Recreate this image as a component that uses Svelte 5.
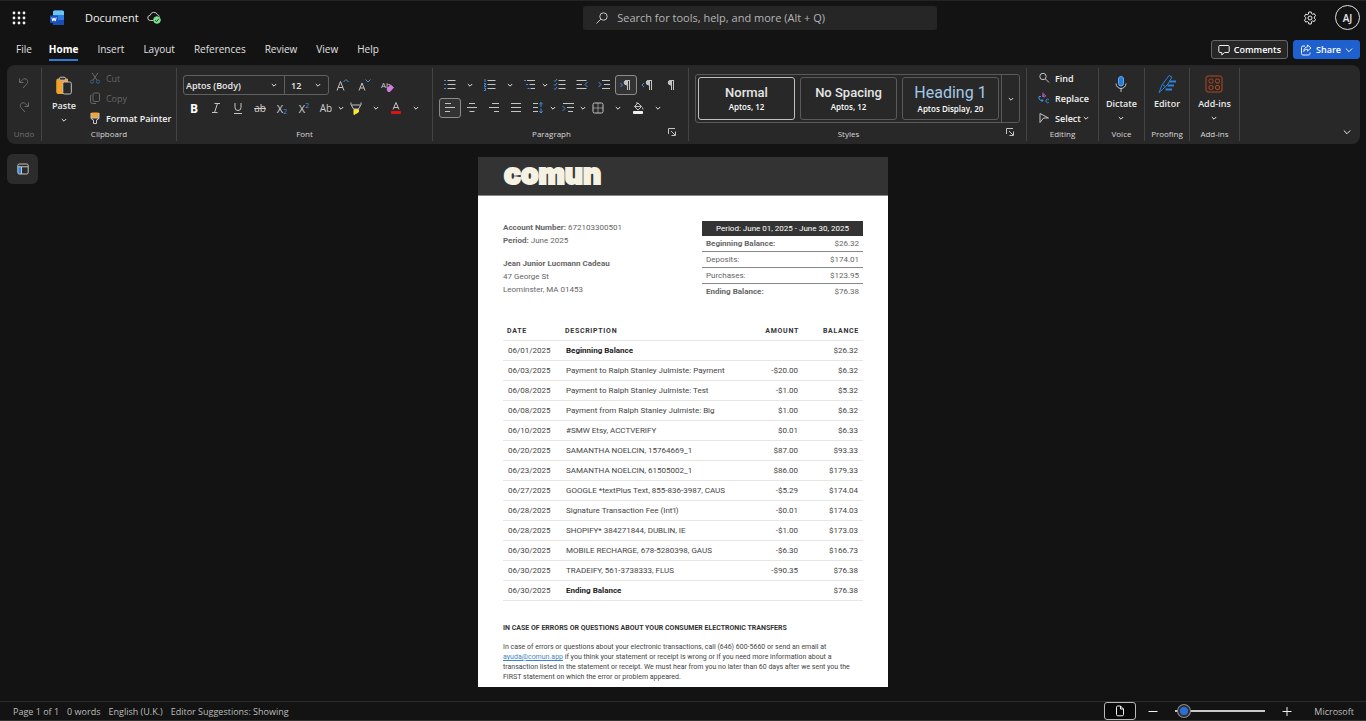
<script>
  let fontFamily = $state('Aptos (Body)');
  let fontSize = $state('12');
  let zoom = $state(3);
  let query = $state('');

  const tabs = ['File', 'Home', 'Insert', 'Layout', 'References', 'Review', 'View', 'Help'];

  const styles = [
    { name: 'Normal', font: 'Aptos, 12', selected: true },
    { name: 'No Spacing', font: 'Aptos, 12' },
    { name: 'Heading 1', font: 'Aptos Display, 20', heading: true }
  ];

  const summary = [
    { label: 'Beginning Balance:', value: '$26.32', strong: true },
    { label: 'Deposits:', value: '$174.01' },
    { label: 'Purchases:', value: '$123.95' },
    { label: 'Ending Balance:', value: '$76.38', strong: true }
  ];

  const rows = [
    ['06/01/2025', 'Beginning Balance', '', '$26.32'],
    ['06/03/2025', 'Payment to Ralph Stanley Julmiste: Payment', '-$20.00', '$6.32'],
    ['06/08/2025', 'Payment to Ralph Stanley Julmiste: Test', '-$1.00', '$5.32'],
    ['06/08/2025', 'Payment from Ralph Stanley Julmiste: Big', '$1.00', '$6.32'],
    ['06/10/2025', '#SMW Etsy, ACCTVERIFY', '$0.01', '$6.33'],
    ['06/20/2025', 'SAMANTHA NOELCIN, 15764669_1', '$87.00', '$93.33'],
    ['06/23/2025', 'SAMANTHA NOELCIN, 61505002_1', '$86.00', '$179.33'],
    ['06/27/2025', 'GOOGLE *textPlus Text, 855-836-3987, CAUS', '-$5.29', '$174.04'],
    ['06/28/2025', "Signature Transaction Fee (Int'l)", '-$0.01', '$174.03'],
    ['06/28/2025', 'SHOPIFY* 384271844, DUBLIN, IE', '-$1.00', '$173.03'],
    ['06/30/2025', 'MOBILE RECHARGE, 678-5280398, GAUS', '-$6.30', '$166.73'],
    ['06/30/2025', 'TRADEIFY, 561-3738333, FLUS', '-$90.35', '$76.38'],
    ['06/30/2025', 'Ending Balance', '', '$76.38']
  ];
</script>

{#snippet chevron()}
  <svg class="chev" viewBox="0 0 8 8" width="8" height="8"><path d="M1.8 3l2.2 2.2L6.2 3" /></svg>
{/snippet}

{#snippet more(label, wide)}
  <button class="drop" class:wide aria-label={label}>{@render chevron()}</button>
{/snippet}

{#snippet launcher(label)}
  <button class="launcher" aria-label={label}>
    <svg viewBox="0 0 8 8" width="8" height="8"><path d="M.5 6V.5H7M3 3l4 4M7.5 3.5v4h-4" /></svg>
  </button>
{/snippet}

{#snippet pilcrow(arrow)}
  <svg viewBox="0 0 14 14" width="14" height="14">
    {#if arrow}<path class="blue" d={arrow === 'ltr' ? 'M1.5 5l2 2-2 2' : 'M3 5L1 7l2 2'} />{/if}
    <path d="M11 2.500H7.500a2 2 0 0 0 0 4.300h1M8.500 2.500V12M10.500 2.500V12" />
    <path class="fill" d="M8.500 2.500h-1a2 2 0 0 0 0 4.300h1z" />
  </svg>
{/snippet}

<div class="app">
  <header class="topbar">
    <div class="brand">
      <button class="bare" aria-label="App launcher">
        <svg viewBox="0 0 14 14" width="14" height="14" class="dots">
          {#each [2, 7, 12] as cy}
            {#each [2, 7, 12] as cx}
              <circle {cx} {cy} r="1.4" />
            {/each}
          {/each}
        </svg>
      </button>
      <svg class="word" viewBox="0 0 14 16" width="14" height="16">
        <rect x="3" y="0.5" width="11" height="14.5" rx="1.6" fill="#2b7de0" />
        <path d="M3 2.1A1.6 1.6 0 0 1 4.6.5h7.8A1.6 1.6 0 0 1 14 2.1V5H3z" fill="#6cc6f5" />
        <path d="M3 10h11v3.4a1.6 1.6 0 0 1-1.6 1.6H4.6A1.6 1.6 0 0 1 3 13.4z" fill="#1b4fb3" />
        <rect x="0" y="5.5" width="8" height="7.5" rx="1" fill="#1a53c0" />
        <path d="M1.8 7.5l1 3.600L4 7.800l1.200 3.300 1-3.600" fill="none" stroke="#fff" />
      </svg>
      <span class="doc-name">Document</span>
      <svg viewBox="0 0 14 13" width="14" height="13">
        <path d="M6 9.500H3.500a2.600 2.600 0 0 1-.3-5.200A3.800 3.800 0 0 1 10.500 3.800 2.600 2.600 0 0 1 12.500 5.500" />
        <circle cx="10" cy="9" r="3.300" fill="#7fdc8c" style:stroke="#7fdc8c" />
        <path d="M8.200 9.200l1.300 1.300 2.400-2.600" style:stroke="#123c18" />
      </svg>
    </div>
    <label class="search">
      <svg viewBox="0 0 14 14" width="14" height="14"><circle cx="8.5" cy="5.5" r="3.7" /><path d="M5.8 8.200L1.500 12.500" /></svg>
      <input type="text" bind:value={query} aria-label="Search" placeholder="Search for tools, help, and more (Alt + Q)" />
    </label>
    <div class="account">
      <button class="bare" aria-label="Settings">
        <svg viewBox="0 0 14 14" width="14" height="14" class="bright">
          <path d="M5.800 1h2.400l.4 1.700 1 .5 1.700-.5 1.200 2-1.200 1.300v1.200l1.200 1.300-1.200 2-1.700-.5-1 .5L8.200 13H5.800l-.4-1.900-1-.5-1.700.5-1.200-2 1.200-1.300V6.600L1.500 5.200l1.200-2 1.700.5 1-.5z" />
          <circle cx="7" cy="7" r="2" />
        </svg>
      </button>
      <button class="avatar">AJ</button>
    </div>
  </header>

  <nav class="tabs">
    {#each tabs as tab}
      <button class="tab" class:active={tab === 'Home'}>{tab}</button>
    {/each}
    <div class="actions">
      <button class="comments">
        <svg viewBox="0 0 12 12" width="12" height="12" class="bright"><path d="M2 1.500h8a1.200 1.200 0 0 1 1.200 1.200v4.600A1.200 1.200 0 0 1 10 8.500H6.500L3.800 11V8.500H2A1.200 1.200 0 0 1 .8 7.300V2.700A1.200 1.200 0 0 1 2 1.500z" /></svg>
        Comments
      </button>
      <button class="share">
        <svg viewBox="0 0 12 12" width="12" height="12" class="bright"><path d="M5 2H3a1.500 1.500 0 0 0-1.500 1.500v6A1.500 1.500 0 0 0 3 11h5.500A1.500 1.500 0 0 0 10 9.500V8.500M7.500 1l3.500 3-3.500 3V5.300C5.500 5.300 4.500 6 3.800 7.500 4 4.500 5.500 3 7.500 2.800z" /></svg>
        Share
        <svg viewBox="0 0 8 8" width="8" height="8" class="bright"><path d="M.8 2.500L4 5.700l3.200-3.200" /></svg>
      </button>
    </div>
  </nav>

  <div class="ribbon">
    <section class="group undo">
      <div class="content stack">
        <button class="bare" aria-label="Undo">
          <svg viewBox="0 0 12 12" width="12" height="12" class="dim"><path d="M1.500 1.500v4h4M1.700 5.300L4.500 2.700a3 3 0 0 1 4.800.5c.8 1.300.4 2.700-.5 3.700L5 11" /></svg>
        </button>
        <button class="bare" aria-label="Redo">
          <svg viewBox="0 0 12 12" width="12" height="12" class="dim"><path d="M10.500 1.500v4h-4M10.300 5.300L7.500 2.700a3 3 0 0 0-4.800.5c-.8 1.300-.4 2.700.5 3.700L7 11" /></svg>
        </button>
      </div>
      <h2 class="muted">Undo</h2>
    </section>

    <section class="group clipboard">
      <div class="content">
        <button class="big">
          <svg viewBox="0 0 18 20" width="18" height="20">
            <path d="M3 3h9.500v3H8.500v11.500H3A1.200 1.200 0 0 1 1.800 16.300V4.200A1.200 1.200 0 0 1 3 3z" fill="#f3a02f" style:stroke="#f3a02f" />
            <rect x="4.5" y="1.2" width="6" height="3" rx="1.3" fill="#333" />
            <rect x="7.8" y="6" width="8.5" height="12" rx="1.5" fill="#282828" />
          </svg>
          <span>Paste</span>
          {@render chevron()}
        </button>
        <div class="list">
          <button class="item" disabled>
            <svg viewBox="0 0 12 12" width="12" height="12"><path class="dim" d="M3 .8l5 7.500M9 .8L4 8.300" /><g style:stroke="#345f86"><circle cx="3" cy="9.7" r="1.6" /><circle cx="9" cy="9.7" r="1.6" /></g></svg>
            Cut
          </button>
          <button class="item" disabled>
            <svg viewBox="0 0 12 12" width="12" height="12" class="dim"><rect x="4" y="1" width="6.5" height="8.5" rx="1.2" /><path d="M2.500 3a1 1 0 0 0-1 1v5.500a2 2 0 0 0 2 2H7" /></svg>
            Copy
          </button>
          <button class="item">
            <svg viewBox="0 0 12 12" width="12" height="12"><path d="M2.500 1h7v4.500h-7z" fill="#f0a336" style:stroke="#f0a336" /><path d="M2 1v5.500l2.500 1.500v3.500h3V8L10 6.500V1M2 6h8" /></svg>
            Format Painter
          </button>
        </div>
      </div>
      <h2>Clipboard</h2>
    </section>

    <section class="group font">
      <div class="content rows">
        <div class="row">
          <div class="selects">
            <label class="family">
              <select bind:value={fontFamily} aria-label="Font"><option>Aptos (Body)</option><option>Aptos Display</option></select>
              {@render chevron()}
            </label>
            <label class="size">
              <select bind:value={fontSize} aria-label="Font size"><option>11</option><option>12</option><option>14</option></select>
              {@render chevron()}
            </label>
          </div>
          <button class="tool" aria-label="Increase font size"><svg viewBox="0 0 14 14" width="14" height="14"><path d="M2 12.500l3.500-9 3.500 9M3.300 9.500h4.400" /><path class="blue" d="M8.500 4L11 1.500 13.500 4" /></svg></button>
          <button class="tool" aria-label="Decrease font size"><svg viewBox="0 0 14 14" width="14" height="14"><path d="M2 12.500l3-7.500 3 7.500M3.200 10h3.600" /><path class="blue" d="M8.500 1.500L11 4l2.500-2.500" /></svg></button>
          <button class="tool" aria-label="Clear formatting"><span class="glyph tiny">Ab</span><svg class="eraser" viewBox="0 0 8 8" width="8" height="8"><path d="M1 5l3.500-4L7.500 3.500 4 7.500H2z" fill="#d47be0" style:stroke="#d47be0" /></svg></button>
        </div>
        <div class="row">
          <button class="tool glyph bold">B</button>
          <button class="tool" aria-label="Italic"><svg viewBox="0 0 14 14" width="14" height="14"><path d="M5.500 2.500H11M3 11.500h5.500M8.500 2.500l-3 9" /></svg></button>
          <button class="tool" aria-label="Underline"><svg viewBox="0 0 14 14" width="14" height="14"><path d="M4 2v4.500a3 3 0 0 0 6 0V2M3 12.500h8" /></svg></button>
          <button class="tool glyph strike">ab</button>
          <button class="tool glyph">X<sub>2</sub></button>
          <button class="tool glyph">X<sup>2</sup></button>
          <button class="tool glyph small">Ab</button>
          {@render more('Change case')}
          <button class="tool" aria-label="Highlight"><svg viewBox="0 0 14 14" width="14" height="14"><path d="M5 8.500h4.500V11L5 13.500z" fill="#fde92b" style:stroke="#fde92b" /><path d="M2 1.500v2l2.500 4.500h5L12 3.500v-2M2.500 4h9" /></svg></button>
          {@render more('Highlight colors', true)}
          <button class="tool" aria-label="Font color"><svg viewBox="0 0 14 14" width="14" height="14"><path d="M4 8.500L7 1.500l3 7M5 6.500h4" /><path d="M2.500 10.500h9v2h-9z" fill="#dc1414" style:stroke="#dc1414" /></svg></button>
          {@render more('Font colors', true)}
        </div>
      </div>
      <h2>Font</h2>
    </section>

    <section class="group paragraph">
      <div class="content rows">
        <div class="row">
          <button class="tool" aria-label="Bullets"><svg viewBox="0 0 14 14" width="14" height="14"><path d="M4.500 2.500h8M4.500 6.500h8M4.500 10.500h8" /><path class="blue" d="M1 2.500h2M1 6.500h2M1 10.500h2" /></svg></button>
          {@render more('Bullet styles', true)}
          <button class="tool" aria-label="Numbering"><svg viewBox="0 0 14 14" width="14" height="14"><path d="M4.500 2.500h8M4.500 6.500h8M4.500 10.500h8" /><path class="blue" d="M2 1v3M1 5.500h1.500v1.500H1.500v1.500H3M1 10h1.500v2.500H1" /></svg></button>
          {@render more('Numbering styles', true)}
          <button class="tool" aria-label="Multilevel list"><svg viewBox="0 0 14 14" width="14" height="14"><path d="M4 2.500h8M6.500 6.500H12M7.500 10.500H12" /><path class="blue" d="M1 2.500h2M3 6.500h2M4.500 10.500h2" /></svg></button>
          {@render more('Multilevel styles')}
          <button class="tool" aria-label="Checklist"><svg viewBox="0 0 14 14" width="14" height="14"><path d="M5.500 2.500h7M5.500 6.500h7M5.500 10.500h7" /><path class="blue" d="M1 2.500l1 1L4 1M1 6.500l1 1L4 5M1 10.500l1 1L4 9" /></svg></button>
          <button class="tool" aria-label="Decrease indent"><svg viewBox="0 0 14 14" width="14" height="14"><path d="M1.500 2.500h10M1.500 6.500H7M1.500 10.500h10" /><path class="blue" d="M12.500 4L10 6.500 12.500 9" /></svg></button>
          <button class="tool" aria-label="Increase indent"><svg viewBox="0 0 14 14" width="14" height="14"><path d="M5 2.500h8M7 6.500h6M5 10.500h8" /><path class="blue" d="M1.500 4L4 6.500 1.500 9" /></svg></button>
          <button class="tool on" aria-label="Left-to-right">{@render pilcrow('ltr')}</button>
          <button class="tool" aria-label="Right-to-left">{@render pilcrow('rtl')}</button>
          <button class="tool" aria-label="Show marks">{@render pilcrow()}</button>
        </div>
        <div class="row">
          <button class="tool on" aria-label="Align left"><svg viewBox="0 0 14 14" width="14" height="14"><path d="M2 2.500h6M2 6.500h10M2 10.500h5" /></svg></button>
          <button class="tool" aria-label="Center"><svg viewBox="0 0 14 14" width="14" height="14"><path d="M4 2.500h6M2 6.500h10M4.500 10.500h5" /></svg></button>
          <button class="tool" aria-label="Align right"><svg viewBox="0 0 14 14" width="14" height="14"><path d="M5 2.500h7M2 6.500h10M7 10.500h5" /></svg></button>
          <button class="tool" aria-label="Justify"><svg viewBox="0 0 14 14" width="14" height="14"><path d="M2 2.500h10M2 6.500h10M2 10.500h10" /></svg></button>
          <button class="tool" aria-label="Line spacing"><svg viewBox="0 0 14 14" width="14" height="14"><path d="M2 2.500h5M2 6.500h5M2 10.500h5" /><path class="blue" d="M10 1.500V6M8.300 3.200L10 1.500l1.700 1.700M10 7.500V12M8.300 10.300L10 12l1.700-1.700" /></svg></button>
          {@render more('Line spacing options')}
          <button class="tool" aria-label="Indentation"><svg viewBox="0 0 14 14" width="14" height="14"><path d="M2 2.500h11M6 6.500h7M7 10.500h5" /><path class="blue" d="M1.500 5L4 7.500 1.500 10" /></svg></button>
          {@render more('Indentation options')}
          <button class="tool" aria-label="Borders"><svg viewBox="0 0 14 14" width="14" height="14"><rect x="2" y="2" width="10" height="10" rx="1.5" /><path d="M7 2v10M2 7h10" stroke-width=".6" /></svg></button>
          {@render more('Border styles', true)}
          <button class="tool" aria-label="Shading"><svg viewBox="0 0 14 14" width="14" height="14"><path d="M6 1v2M7 2l3.500 3.500L7 9 3.500 5.500zM3.500 5.500h7M11.500 6.500l.5 2" /><path d="M2.500 10.500h9v2h-9z" fill="#eee" style:stroke="#eee" /></svg></button>
          {@render more('Shading colors', true)}
        </div>
      </div>
      <h2>Paragraph</h2>
      {@render launcher('Paragraph settings')}
    </section>

    <section class="group styles">
      <div class="gallery">
        <div class="cards">
          {#each styles as s}
            <button class="card" class:selected={s.selected} class:heading={s.heading}>
              <span class="name">{s.name}</span>
              <span class="face">{s.font}</span>
            </button>
          {/each}
        </div>
        <button class="expand" aria-label="More styles">{@render chevron()}</button>
      </div>
      <h2>Styles</h2>
      {@render launcher('Styles pane')}
    </section>

    <section class="group editing">
      <div class="content list">
        <button class="item">
          <svg viewBox="0 0 12 12" width="12" height="12"><circle cx="5" cy="4.5" r="3.2" /><path d="M7.500 7l3.500 3.500" /></svg>
          Find
        </button>
        <button class="item">
          <svg viewBox="0 0 12 12" width="12" height="12"><path style:stroke="#b06bc4" d="M5 .5V5M5 3.800a1.200 1.200 0 1 1 2.400 0 1.200 1.200 0 0 1-2.400 0" /><path class="blue" d="M3 4.500H1v2.500l2 1.500h2M3.500 7L5 8.500 3.500 10M10.800 7.500a1.800 1.800 0 1 0 0 2.800" /></svg>
          Replace
        </button>
        <button class="item">
          <svg viewBox="0 0 12 12" width="12" height="12"><path d="M2 1.500L10.500 6H5.500L2 10.500z" /></svg>
          <span>Select</span>
          {@render chevron()}
        </button>
      </div>
      <h2>Editing</h2>
    </section>

    <section class="group voice">
      <div class="content">
        <button class="big">
          <svg viewBox="0 0 18 20" width="18" height="20"><rect x="6.5" y="2.5" width="5" height="9.5" rx="2.5" fill="#2a7bd8" style:stroke="#62a8f0" /><path d="M4 9.500a5 5 0 0 0 10 0M9 14.500V18" /></svg>
          <span>Dictate</span>
          {@render chevron()}
        </button>
      </div>
      <h2>Voice</h2>
    </section>

    <section class="group proofing">
      <div class="content">
        <button class="big">
          <svg viewBox="0 0 20 20" width="20" height="20" class="editor"><path d="M2 18.500L5 11l7-9.500 3 1.500-4 7-5.500 5.500zM6 11l3 2" /><path class="thick" d="M12.500 7.500H19M10.500 11.500H17M8.500 15.500H15" /></svg>
          <span>Editor</span>
        </button>
      </div>
      <h2>Proofing</h2>
    </section>

    <section class="group addins">
      <div class="content">
        <button class="big">
          <svg viewBox="0 0 18 20" width="18" height="20" class="rust"><rect x="1" y="2" width="16" height="16" rx="2" /><rect x="4" y="5" width="4" height="4" rx="1.5" /><rect x="10.5" y="5" width="4" height="4" rx="1.5" /><rect x="4" y="11.5" width="4" height="4" rx="1.5" /><rect x="10.5" y="11.5" width="4" height="4" rx="1.5" /></svg>
          <span>Add-ins</span>
          {@render chevron()}
        </button>
      </div>
      <h2>Add-ins</h2>
    </section>

    <button class="collapse bare" aria-label="Collapse ribbon">
      <svg viewBox="0 0 8 8" width="8" height="8" class="bright"><path d="M.8 2.500L4 5.700l3.200-3.200" /></svg>
    </button>
  </div>

  <main class="workspace">
    <button class="pane" aria-label="Navigation pane">
      <svg viewBox="0 0 12 12" width="12" height="12"><path d="M1.500 4h3v6.500h-3z" fill="#2f86e0" style:stroke="#2f86e0" /><rect x=".8" y="1" width="10.4" height="10" rx="1.5" /><path d="M1 3.800h10M4.500 3.800V11" /></svg>
    </button>

    <article class="page">
      <div class="banner">comun</div>
      <div class="body">
        <div class="intro">
          <div class="holder">
            <p><b>Account Number:</b> 672103300501<br /><b>Period:</b> June 2025</p>
            <p><b>Jean Junior Lucmann Cadeau</b><br />47 George St<br />Leominster, MA 01453</p>
          </div>
          <table class="summary">
            <thead><tr><th colspan="2">Period: June 01, 2025 - June 30, 2025</th></tr></thead>
            <tbody>
              {#each summary as line}
                <tr><td class:strong={line.strong}>{line.label}</td><td>{line.value}</td></tr>
              {/each}
            </tbody>
          </table>
        </div>

        <table class="ledger">
          <thead>
            <tr><th class="date">Date</th><th>Description</th><th class="num">Amount</th><th class="num">Balance</th></tr>
          </thead>
          <tbody>
            {#each rows as [date, description, amount, balance]}
              <tr>
                <td>{date}</td>
                <td class:strong={!amount}>{description}</td>
                <td class="num">{amount}</td>
                <td class="num">{balance}</td>
              </tr>
            {/each}
          </tbody>
        </table>

        <h3>IN CASE OF ERRORS OR QUESTIONS ABOUT YOUR CONSUMER ELECTRONIC TRANSFERS</h3>
        <p class="notice">
          In case of errors or questions about your electronic transactions, call (646) 600-5660 or send an email at
          <a href="mailto:ayuda@comun.app">ayuda@comun.app</a> if you think your statement or receipt is wrong or if you need more information about a
          transaction listed in the statement or receipt. We must hear from you no later than 60 days after we sent you the
          FIRST statement on which the error or problem appeared.
        </p>
      </div>
    </article>
  </main>

  <footer class="status">
    <span>Page 1 of 1</span>
    <span>0 words</span>
    <span>English (U.K.)</span>
    <span>Editor Suggestions: Showing</span>
    <div class="zoom">
      <button class="view" aria-label="Print layout"><svg viewBox="0 0 10 12" width="10" height="12" class="bright"><path d="M2.500 1H5.500L8.500 4v5.500a1.300 1.300 0 0 1-1.300 1.300H2.800A1.300 1.300 0 0 1 1.500 9.500V2.200A1.200 1.200 0 0 1 2.500 1zM5.500 1v3h3" /></svg></button>
      <button class="bare" aria-label="Zoom out"><svg viewBox="0 0 10 10" width="10" height="10" class="bright"><path d="M.5 5.500h9" /></svg></button>
      <input type="range" min="0" max="100" bind:value={zoom} aria-label="Zoom" />
      <button class="bare" aria-label="Zoom in"><svg viewBox="0 0 10 10" width="10" height="10" class="bright"><path d="M.5 5.500h9M5 1v9" /></svg></button>
    </div>
    <span>Microsoft</span>
  </footer>
</div>

<style>
  :global(body) {
    margin: 0;
    background: #131313;
  }

  .app {
    display: flex;
    flex-direction: column;
    min-height: 100vh;
    box-sizing: border-box;
    border-top: 1px solid #242424;
    border-bottom: 1px solid #333;
    color: #e8e8e8;
    font-family: "Open Sans", "Noto Sans", sans-serif;
    font-size: 11px;
  }

  button,
  input,
  select {
    font: inherit;
    color: inherit;
    margin: 0;
    padding: 0;
    border: none;
    background: none;
    outline: none;
  }

  button {
    display: flex;
    align-items: center;
    justify-content: center;
    white-space: nowrap;
  }

  svg {
    flex: none;
    fill: none;
    stroke: #c4c4c4;
    stroke-width: 1;
  }

  .bright { stroke: #f0f0f0; }
  .dim { stroke: #686868; }
  .blue { stroke: #3b92e8; }
  .fill { fill: #c4c4c4; }
  .chev { stroke: #e4e4e4; }
  .word { stroke: none; }
  .rust { stroke: #b5471f; }
  .editor { stroke: #2d82dc; }
  .thick { stroke-width: 2; }

  .dots {
    fill: #f0f0f0;
    stroke: none;
  }

  /* title bar */
  .topbar {
    display: grid;
    grid-template-columns: 50fr 31fr 37fr;
    align-items: center;
    height: 33px;
    padding: 0 6px 0 12px;
  }

  .brand {
    display: flex;
    align-items: center;
    gap: 8px;
  }

  .brand .word {
    margin: 0 13px 0 16px;
  }

  .doc-name {
    color: #f0f0f0;
  }

  .search {
    display: flex;
    align-items: center;
    gap: 8px;
    height: 24px;
    padding: 0 12px;
    border-radius: 3px;
    background: #262626;
  }

  .search input {
    flex: 1;
    min-width: 0;
    font-size: 11px;
  }

  .search input::placeholder {
    color: #b5b5b5;
    opacity: 1;
  }

  .account {
    display: flex;
    align-items: center;
    justify-content: flex-end;
    gap: 18px;
  }

  .avatar {
    width: 25px;
    height: 25px;
    border: 1px solid #e0e0e0;
    border-radius: 50%;
    font-size: 10px;
    font-weight: 600;
  }

  /* tabs */
  .tabs {
    display: flex;
    align-items: center;
    gap: 19px;
    height: 31px;
    padding: 0 6px 0 16px;
  }

  .tab {
    height: 23px;
    border-bottom: 2px solid transparent;
    font-size: 10px;
    color: #e0e0e0;
  }

  .tab.active {
    border-color: #2f7cd8;
    color: #fff;
    font-weight: 700;
  }

  .tab:first-child {
    margin-right: -2px;
  }

  .actions {
    display: flex;
    gap: 5px;
    margin-left: auto;
  }

  .comments,
  .share {
    gap: 4px;
    height: 19px;
    padding: 0 6px;
    border: 1px solid #666;
    border-radius: 3px;
    box-sizing: border-box;
    background: #262626;
    font-size: 9px;
    font-weight: 600;
    color: #fff;
  }

  .share {
    border-color: #1f60cf;
    background: #1f60cf;
  }

  /* ribbon */
  .ribbon {
    display: flex;
    height: 79px;
    margin: 0 6px 0 7px;
    border-radius: 8px;
    background: #282828;
    position: relative;
  }

  .group {
    display: flex;
    flex-direction: column;
    justify-content: space-between;
    box-sizing: border-box;
    margin: 3px 0;
    padding: 6px 0 1px;
    border-right: 1px solid #444;
    position: relative;
  }

  .group h2 {
    margin: 0;
    font-size: 8px;
    font-weight: 400;
    line-height: 12px;
    text-align: center;
    color: #d8d8d8;
  }

  .group h2.muted {
    color: #6e6e6e;
  }

  .paragraph h2,
  .styles h2 {
    padding-right: 18px;
  }

  .undo { width: 35px; }
  .clipboard { width: 135px; }
  .font,
  .paragraph { width: 256px; }
  .styles { width: 338px; }
  .editing { width: 72px; }
  .voice { width: 46px; }
  .proofing { width: 45px; }
  .addins { width: 50px; }

  .content {
    display: flex;
  }

  .stack {
    flex-direction: column;
    align-items: center;
    gap: 12px;
    padding-top: 3px;
  }

  .clipboard .content {
    gap: 13px;
    padding-left: 10px;
  }

  .clipboard .content,
  .editing .content {
    margin-top: -6px;
  }

  .big {
    flex-direction: column;
    font-size: 9px;
    font-weight: 600;
    line-height: 14px;
    margin: 0 auto auto;
    gap: 3px;
  }

  .clipboard .big {
    margin: 4px 0 0;
  }

  .list {
    display: flex;
    flex-direction: column;
    flex: 1;
  }

  .item {
    justify-content: flex-start;
    gap: 5px;
    height: 20px;
    font-size: 9px;
    font-weight: 600;
    color: #f4f4f4;
  }

  .item:disabled {
    font-weight: 400;
    color: #666;
  }

  .editing .list {
    padding-left: 11px;
  }

  .editing .item span {
    margin-right: -4px;
  }

  .rows {
    flex-direction: column;
    gap: 3px;
    padding: 1px 0 0 6px;
  }

  .row {
    display: flex;
    align-items: center;
    height: 20px;
  }

  .tool {
    width: 22px;
    height: 20px;
    position: relative;
    box-sizing: border-box;
  }

  .tool.on {
    border: 1px solid #8c8c8c;
    border-radius: 3px;
    background: #333;
  }

  .drop {
    width: 8px;
    height: 20px;
  }

  .drop.wide {
    width: 18px;
  }

  .glyph {
    font-size: 11px;
    color: #cfcfcf;
  }

  .glyph.bold {
    font-weight: 700;
    color: #fff;
    font-size: 12px;
  }

  .glyph.strike {
    text-decoration: line-through;
    font-size: 10px;
  }

  .glyph.small { font-size: 10px; }

  .glyph.tiny {
    font-size: 8px;
    line-height: 14px;
  }

  .eraser {
    position: absolute;
    right: 3px;
    bottom: 3px;
  }

  sub,
  sup {
    font-size: 7px;
    line-height: 7px;
    color: #3b92e8;
  }

  sub { align-self: flex-end; margin-bottom: 3px; }
  sup { align-self: flex-start; margin-top: 4px; }

  .selects {
    display: flex;
    height: 20px;
    box-sizing: border-box;
    margin-right: 2px;
    border: 1px solid #606060;
    border-radius: 3px;
  }

  .selects label {
    display: grid;
    align-items: center;
  }

  .selects select,
  .selects label > :global(svg) {
    grid-area: 1 / 1;
  }

  .selects label > :global(svg) {
    justify-self: end;
    margin-right: 6px;
    pointer-events: none;
  }

  .selects select {
    appearance: none;
    width: 100%;
    height: 18px;
    padding: 0 2px;
    font-size: 9px;
    font-weight: 600;
  }

  .family { width: 100px; }

  .size {
    width: 43px;
    border-left: 1px solid #606060;
  }

  .size select {
    padding-left: 6px;
  }

  .launcher {
    position: absolute;
    right: 12px;
    bottom: 5px;
  }

  .gallery {
    display: flex;
    height: 49px;
    box-sizing: border-box;
    margin: 0 6px;
    border: 1px solid #5a5a5a;
    border-radius: 3px;
  }

  .cards {
    display: grid;
    grid-template-columns: repeat(3, 1fr);
    gap: 5px;
    flex: 1;
    padding: 2px;
  }

  .card {
    flex-direction: column;
    border: 1px solid #5a5a5a;
    border-radius: 3px;
  }

  .card.selected {
    border-color: #c0c0c0;
  }

  .name {
    font-family: Roboto, sans-serif;
    font-size: 13px;
    font-weight: 500;
    line-height: 16px;
    color: #e6e6e6;
  }

  .heading .name {
    font-size: 16px;
    font-weight: 400;
    line-height: 20px;
    color: #a3c8e8;
  }

  .face {
    font-size: 8px;
    font-weight: 600;
    line-height: 12px;
    color: #fff;
  }

  .expand {
    width: 18px;
    border-left: 1px solid #5a5a5a;
  }

  .collapse {
    position: absolute;
    right: 9px;
    bottom: 8px;
  }

  /* document area */
  .workspace {
    display: grid;
    grid-template-columns: 1fr 410px 1fr;
    align-items: start;
    flex: 1;
    padding: 10px 7px 14px;
  }

  .pane {
    width: 31px;
    height: 30px;
    border-radius: 6px;
    background: #2c2c2c;
  }

  .page {
    margin-top: 3px;
    background: #fff;
    color: #666;
    font-family: Roboto, sans-serif;
    font-size: 8px;
  }

  .banner {
    height: 38px;
    padding-left: 26px;
    border-bottom: 1px solid #888;
    background: #333;
    color: #f5f1e3;
    font-family: Inter, sans-serif;
    font-size: 28px;
    font-weight: 900;
    line-height: 34px;
    -webkit-text-stroke: 2px #f5f1e3;
  }

  .body {
    padding: 25px 25px 5px;
  }

  .intro {
    display: flex;
    justify-content: space-between;
    align-items: flex-start;
  }

  .holder p {
    margin: 0 0 10px;
    line-height: 13px;
  }

  b,
  .strong {
    font-weight: 700;
  }

  table {
    border-collapse: collapse;
  }

  td,
  th {
    padding: 0;
  }

  .summary {
    width: 161px;
  }

  .summary th {
    height: 15px;
    background: #333;
    color: #fff;
    font-weight: 400;
  }

  .summary td {
    height: 15px;
    padding: 0 4px;
    border-bottom: 1px solid #888;
  }

  .summary tr:last-child td {
    border-bottom: none;
  }

  .summary td:last-child {
    text-align: right;
  }

  .ledger {
    width: 100%;
    margin-top: 16px;
    color: #444;
  }

  .ledger th {
    height: 18px;
    padding: 0 4px;
    border-bottom: 1px solid #e6e6e6;
    font-size: 7px;
    font-weight: 700;
    letter-spacing: 0.1em;
    text-align: left;
    text-transform: uppercase;
    color: #333;
  }

  .ledger .date {
    width: 50px;
  }

  .ledger td {
    height: 19px;
    padding: 0 5px;
    border-bottom: 1px solid #e6e6e6;
  }

  .ledger .strong {
    color: #222;
  }

  .ledger .num {
    width: 50px;
    text-align: right;
  }

  h3 {
    margin: 22px 0 9px;
    font-size: 7px;
    font-weight: 700;
    line-height: 10px;
    color: #333;
  }

  .notice {
    margin: 0;
    font-size: 7px;
    line-height: 10px;
    color: #444;
  }

  .notice a {
    color: #3f87c4;
  }

  /* status bar */
  .status {
    display: flex;
    align-items: center;
    gap: 8px;
    height: 18px;
    padding: 0 12px 0 13px;
    border-top: 1px solid #2c2c2c;
    font-size: 9px;
    color: #bdbdbd;
  }

  .zoom {
    display: flex;
    align-items: center;
    gap: 12px;
    margin: 0 14px 0 auto;
  }

  .view {
    width: 32px;
    height: 18px;
    box-sizing: border-box;
    border: 1px solid #b8b8b8;
    border-radius: 3px;
    background: #0a0a0a;
  }

  .zoom input {
    appearance: none;
    width: 90px;
    height: 14px;
    margin: 0 5px;
  }

  .zoom input::-webkit-slider-runnable-track {
    height: 2px;
    background: #c8c8c8;
  }

  .zoom input::-webkit-slider-thumb {
    appearance: none;
    width: 12px;
    height: 12px;
    margin-top: -5px;
    border: 2px solid #303030;
    border-radius: 50%;
    background: #2a6fd8;
    box-shadow: 0 0 0 1px #888;
  }
</style>
